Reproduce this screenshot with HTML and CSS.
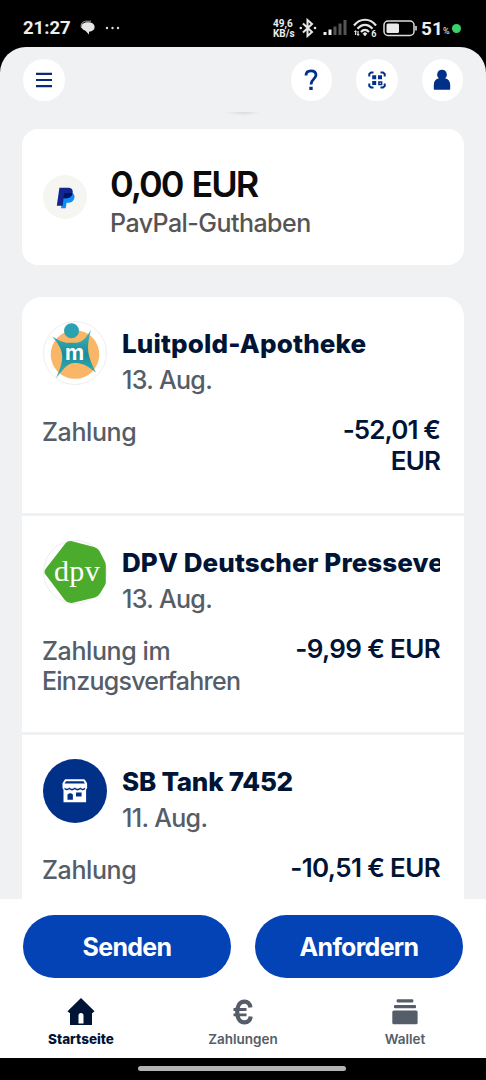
FILE: index.html
```html
<!DOCTYPE html>
<html lang="de">
<head>
<meta charset="utf-8">
<title>PayPal</title>
<link rel="stylesheet" href="styles.css">
</head>
<body>
<div class="screen">
  <div class="status">
    <div class="status-left">
      <span class="clock">21:27</span>
      <svg class="chat" width="16" height="16" viewBox="0 0 16 16"><path d="M1.500 8C0 4 3 1 7 1.200h4" fill="none" stroke="#aaa" stroke-width="1"/><path d="M8 2.200c4 0 6.600 1.800 6.600 4.800 0 2.800-2.100 4.500-5.600 4.700V14.500l-3.600-3.700C3 10 1.500 8.600 1.500 6.600 1.500 4 4 2.200 8 2.200Z" fill="#e6e6e6"/></svg>
      <svg class="dots" width="16" height="4" viewBox="0 0 16 4" fill="#ddd"><circle cx="2" cy="2" r="1.200"/><circle cx="7.500" cy="2" r="1.200"/><circle cx="13" cy="2" r="1.200"/></svg>
    </div>
    <div class="status-right">
      <span class="speed"><span>49,6</span><span>KB/s</span></span>
      <svg class="bt" width="18" height="20" viewBox="0 0 18 20"><path d="M4 5.500 13 14l-4.500 4V2L13 6l-9 8.500" fill="none" stroke="#e6e6e6" stroke-width="2"/><circle cx="1.800" cy="10" r="1.300" fill="#e6e6e6"/><circle cx="16" cy="10" r="1.300" fill="#e6e6e6"/></svg>
      <svg class="signal" width="25" height="16" viewBox="0 0 25 16"><path d="M.5 12h3v3h-3zM5.500 9.500h3V15h-3z" fill="#eee"/><path d="M10.500 6.500h3V15h-3zM15.500 3.500h3V15h-3zM20.500 0h3v15h-3z" fill="#555"/></svg>
      <svg class="wifi" width="25" height="20" viewBox="0 0 25 20"><g fill="none" stroke="#e6e6e6" stroke-width="2.200"><path d="M1 7.500C7-.2 17-.2 23 7.500M4.500 10.800c4.500-5.300 10.500-5.300 15 0M8 14c2.500-2.800 5.500-2.800 8 0"/></g><path d="m9.700 15.700 2.300-1.600 2.300 1.600-2.300 2.500z" fill="#eee"/><path d="M2.600 17v-4M5 13v4" stroke="#ddd" stroke-width="1.300"/><path d="m.8 14 1.800-2 1.300 2zM3.800 16 5 18.200 6.700 16z" fill="#ddd"/><text class="wifi-six" x="18.200" y="18.800">6</text></svg>
      <svg class="battery" width="35" height="17" viewBox="0 0 35 17"><rect x="1" y="1" width="30" height="14.500" rx="4" fill="none" stroke="#ddd" stroke-width="1.500"/><rect x="3.500" y="3.500" width="12.500" height="9.500" rx="1.500" fill="#eaeaea"/><path d="M33 6v4.500" stroke="#ddd" stroke-width="1.600"/></svg>
      <span class="percent">51</span><span class="unit">%</span>
      <span class="live"></span>
    </div>
  </div>

  <div class="app">
    <header class="header">
      <div class="round"><svg width="18" height="16" viewBox="0 0 18 16"><path d="M1 1.800h16M1 8h16M1 14.200h16" stroke="#0a2a78" stroke-width="2.200"/></svg></div>
      <div class="header-actions">
        <div class="round"><svg width="14" height="22" viewBox="0 0 14 22"><path d="M2 6.500C2 3.200 4 1.800 7 1.800s5 1.700 5 4.300C12 10.200 7 9.800 7 15.500" fill="none" stroke="#003087" stroke-width="2.800"/><path d="M5.300 17.700h3.400v3.400H5.300z" fill="#003087"/></svg></div>
        <div class="round"><svg width="18" height="18" viewBox="0 0 18 18"><g fill="none" stroke="#003087" stroke-width="2"><path d="M5.500 1.500H3L1.300 3v2.500M12.500 1.500H15L16.700 3v2.500M5.500 16.500H3L1.300 15v-2.500M12.500 16.500H15l1.700-1.500v-2.500"/><path d="M10.900 10.900h2.700v2.700h-2.700z" stroke-width="1.500"/></g><path d="M4.200 4.200h4v4h-4zM10 4.200h4v4h-4zM4.200 10h4v4h-4z" fill="#003087"/></svg></div>
        <div class="round"><svg width="18" height="22" viewBox="0 0 18 22" fill="#003087"><path d="M9 .8a4.700 4.700 0 0 1 3 8.400c3.300.7 5.200 3.200 5.200 6.800V20q0 .8-.8.800H1.600q-.8 0-.8-.8v-4c0-3.600 1.900-6.100 5.200-6.800A4.700 4.700 0 0 1 9 .8Z"/></svg></div>
      </div>
    </header>

    <main class="content">
      <div class="pull"></div>
      <section class="balance">
        <div class="pp"><svg width="20" height="22" viewBox="0 0 20 22"><path d="M8 6h7c3 .2 4 2.500 3.300 5.300-.8 3-3 4.400-5.800 4.400H10.600L9.700 21.300H5L6 15z" fill="#0c8cf5"/><path d="M3.400.8h8.700c3.600 0 5.200 2.100 4.500 5.400-.7 3.400-2.900 5-6.200 5H7.600L6.600 18.800H.8z" fill="#14258f"/><path d="M8.200 6h8.400c-.6 3.400-2.800 5.200-6.200 5.200H7.500Z" fill="#001560"/></svg></div>
        <div class="balance-text">
          <div class="balance-sum">0,00 EUR</div>
          <div class="balance-label">PayPal-Guthaben</div>
        </div>
      </section>

      <section class="list">
        <article class="row">
          <div class="row-head">
            <svg class="avatar" viewBox="0 0 64 64"><defs><linearGradient id="teal" x1="0" y1="0" x2="0" y2="1"><stop offset="0" stop-color="#4ab5b8"/><stop offset=".5" stop-color="#178d9b"/><stop offset="1" stop-color="#43b4b5"/></linearGradient></defs><circle cx="32" cy="32" r="31.500" fill="#fff" stroke="#eee"/><circle cx="32" cy="33.500" r="24.300" fill="#f9b666"/><path d="M9 15.500C20 22 23 22 30 21.800 38 22 41 20 48 9 43.500 26 43.500 33 53 51.500 42 42.500 36 41.500 31 42 25 42 21 47 13 57.500 20.500 40 23.500 31 9 15.500Z" fill="url(#teal)"/><circle cx="28.500" cy="9.700" r="7.500" fill="#2aa2b0"/><text class="logo-m" x="31.500" y="38.500">m</text></svg>
            <div class="who"><div class="name t1">Luitpold-Apotheke</div><div class="date">13. Aug.</div></div>
          </div>
          <div class="detail"><div class="kind">Zahlung</div><div class="amount a1">-52,01 €<br>EUR</div></div>
        </article>
        <article class="row">
          <div class="row-head">
            <svg class="avatar" viewBox="0 0 64 64"><circle cx="32" cy="32" r="31.500" fill="#fff" stroke="#eee"/><path d="M22.500 3.200Q25 .6 29 1.200L51 7Q54.500 8 56.500 11L62 22q.8 1.500.8 4V42q0 2-1.300 4L57 53.500Q55 56.500 52 57.500L30 62.800q-5 1-8-2.600L2.500 34.500Q.5 32 2.500 29Z" fill="#4bab2d"/><text class="logo-dpv" x="34" y="41">dpv</text></svg>
            <div class="who"><div class="name t2">DPV Deutscher Presseve</div><div class="date">13. Aug.</div></div>
          </div>
          <div class="detail"><div class="kind">Zahlung im<br><span class="tight">Einzugsverfahren</span></div><div class="amount">-9,99 € EUR</div></div>
        </article>
        <article class="row">
          <div class="row-head">
            <svg class="avatar" viewBox="0 0 64 64"><circle cx="32" cy="32" r="32" fill="#003087"/><path d="M22.500 20.300h18.300q.8 0 1.300.7l2 3.200V29l-1 1.800v12.500H20.500V30.800L19.500 29v-4.800l2-3.200q.4-.7 1-.7Z" fill="#fff"/><path d="M23 22.200h17.500l1.400 2.200H21.600zM21.500 28.500q2.500 2.500 4.700 0 2.800 2.500 5.600 0 2.800 2.500 5.600 0 2.300 2.500 4.700 0v1.800q-2.500 2-4.700 0-2.800 2.200-5.600 0-2.800 2.200-5.600 0-2.300 2-4.700 0zM24.500 35.500q2.700-2.700 5.400 0v5.300h-5.400zM33 33.500h5.600v4H33z" fill="#003087"/></svg>
            <div class="who"><div class="name t3">SB Tank 7452</div><div class="date">11. Aug.</div></div>
          </div>
          <div class="detail"><div class="kind">Zahlung</div><div class="amount">-10,51 € EUR</div></div>
        </article>
      </section>
    </main>

    <footer class="bottom">
      <div class="buttons"><button class="pill">Senden</button><button class="pill">Anfordern</button></div>
      <nav class="tabs">
        <div class="tab tab-active"><svg width="28" height="30" viewBox="0 0 28 30"><path fill-rule="evenodd" d="M14 1 27.500 14.300 25.500 16H25v12H3V16h-.5L.5 14.300ZM11.500 26.500h5V18.500q0-2.500-2.500-2.500t-2.500 2.500z" fill="#001435"/></svg><span>Startseite</span></div>
        <div class="tab"><svg width="28" height="30" viewBox="0 0 28 30" fill="none" stroke="#545d68" stroke-width="4.200"><path d="M21.500 10.500C20.700 6 18.500 4.600 15.500 4.600 10.500 4.600 8.200 9 8.200 15s2.300 10.400 7.300 10.400c3.400 0 5.700-1.800 6.200-5.800"/><path d="M4.500 12.500h13M4.500 17.800h13" stroke-width="2.800"/></svg><span>Zahlungen</span></div>
        <div class="tab"><svg width="28" height="30" viewBox="0 0 28 30" fill="#545d68"><rect x="5.700" y="2.200" width="16.600" height="3.400" rx="1"/><rect x="3" y="8" width="22" height="3.300" rx="1"/><rect x="1.300" y="13.500" width="25.300" height="13.700" rx="1.500"/></svg><span>Wallet</span></div>
      </nav>
    </footer>
  </div>
  <div class="gesture"><div class="handle"></div></div>
</div>
</body>
</html>
```
FILE: styles.css
```css
* { box-sizing: border-box; }
body { margin: 0; background: #000; font-family: Inter, "Liberation Sans", sans-serif; }
.screen { width: 486px; height: 1080px; display: flex; flex-direction: column; overflow: hidden; background: #000; }
.status { height: 47px; flex: none; display: flex; justify-content: space-between; padding: 9px 25px 0 23px; color: #eee; font-family: Roboto, sans-serif; }
.status-left, .status-right { display: flex; align-items: center; height: 38px; }
.clock { font-size: 18.500px; font-weight: 700; width: 47px; }
.chat { margin-left: 10px; }
.dots { margin-left: 9px; }
.speed { display: flex; flex-direction: column; font-size: 10px; line-height: 10px; font-weight: 700; width: 21px; margin-right: 5px; padding-top: 2px; }
.bt { margin-right: 6px; }
.signal { margin-right: 5px; }
.wifi { margin-right: 5px; }
.wifi-six { font: 700 9px Roboto, sans-serif; fill: #eee; }
.battery { margin-right: 3px; }
.percent { font-size: 19px; font-weight: 700; width: 22px; padding-top: 1px; }
.unit { font-size: 9px; padding-top: 5px; width: 8px; }
.live { width: 9px; height: 9px; border-radius: 50%; background: #3bd16b; margin-left: 1px; }

.app { height: 1011px; flex: none; display: flex; flex-direction: column; background: #f0f1f3; border-radius: 26px 26px 0 0; overflow: hidden; }
.header { height: 65px; flex: none; display: flex; justify-content: space-between; padding: 12px 23px 0; }
.header-actions { display: flex; gap: 24px; }
.round { width: 41.500px; height: 41.500px; border-radius: 50%; background: #fff; display: flex; align-items: center; justify-content: center; }
.content { height: 787px; flex: none; overflow: hidden; padding: 0 22px; }
.pull { width: 36px; height: 4px; margin: 0 auto 13px; background: radial-gradient(ellipse at 50% 0, #d8d9db, #f0f1f3 70%); }
.balance { height: 136px; background: #fff; border-radius: 16px; display: flex; padding: 0 21px; }
.pp { width: 44px; height: 44px; margin-top: 46px; border-radius: 50%; background: #f5f5f1; display: flex; align-items: center; justify-content: center; }
.pp svg { margin-left: 2px; margin-top: 1px; }
.balance-text { margin-left: 23px; padding-top: 34px; }
.balance-sum { font-size: 36px; line-height: 42px; font-weight: 600; letter-spacing: -2.050px; word-spacing: 2px; color: #0b0b0b; white-space: nowrap; }
.balance-label { height: 28px; overflow: hidden; font-size: 25px; line-height: 36px; font-weight: 500; letter-spacing: -.550px; color: #555; }

.list { margin-top: 32px; background: #fff; border-radius: 20px 20px 0 0; }
.row { height: 219px; border-bottom: 3px solid #f0f1f3; padding: 24px 24px 0 20px; }
.row-head { display: flex; gap: 15px; height: 96px; }
.avatar { width: 64px; height: 64px; margin-left: 1px; flex: none; overflow: visible; }
.logo-m { font: 700 21px Inter, sans-serif; fill: #fff; text-anchor: middle; }
.logo-dpv { font: 30px "Liberation Serif", serif; letter-spacing: .3px; fill: #fff; text-anchor: middle; }
.who { min-width: 0; overflow: hidden; padding-top: 4px; }
.name { font-size: 26px; line-height: 37px; font-weight: 800; color: #001435; white-space: nowrap; }
.t1 { letter-spacing: .150px; }
.t2 { letter-spacing: .080px; }
.t3 { letter-spacing: -.250px; }
.date { font-size: 25px; line-height: 36px; font-weight: 500; letter-spacing: -.650px; color: #545d68; }
.detail { display: flex; justify-content: space-between; line-height: 30px; }
.kind { font-size: 25px; font-weight: 500; color: #545d68; letter-spacing: -.4px; }
.tight { letter-spacing: -.750px; }
.amount { font-size: 26px; font-weight: 600; color: #001435; text-align: right; letter-spacing: -.650px; margin-top: -2px; white-space: nowrap; }
.a1 { letter-spacing: -.9px; line-height: 30.500px; }

.bottom { flex: 1; background: #fff; padding-top: 15.500px; }
.buttons { display: flex; gap: 24px; padding: 0 23px; }
.pill { flex: 1; height: 63px; border: 0; border-radius: 32px; background: #0443b5; color: #fff; font: 700 25px Inter, sans-serif; letter-spacing: -.7px; padding: 2px 0 0; }
.tabs { display: flex; padding-top: 19.500px; }
.tab { flex: 1; display: flex; flex-direction: column; align-items: center; font-size: 13.500px; line-height: 18px; font-weight: 600; color: #545d68; }
.tab span { margin-top: 3px; }
.tab-active { color: #001435; font-weight: 800; }
.gesture { flex: 1; display: flex; justify-content: center; padding-top: 7.500px; }
.handle { width: 208px; height: 5.500px; border-radius: 3px; background: #b3b3b3; margin-right: 2px; }
```
